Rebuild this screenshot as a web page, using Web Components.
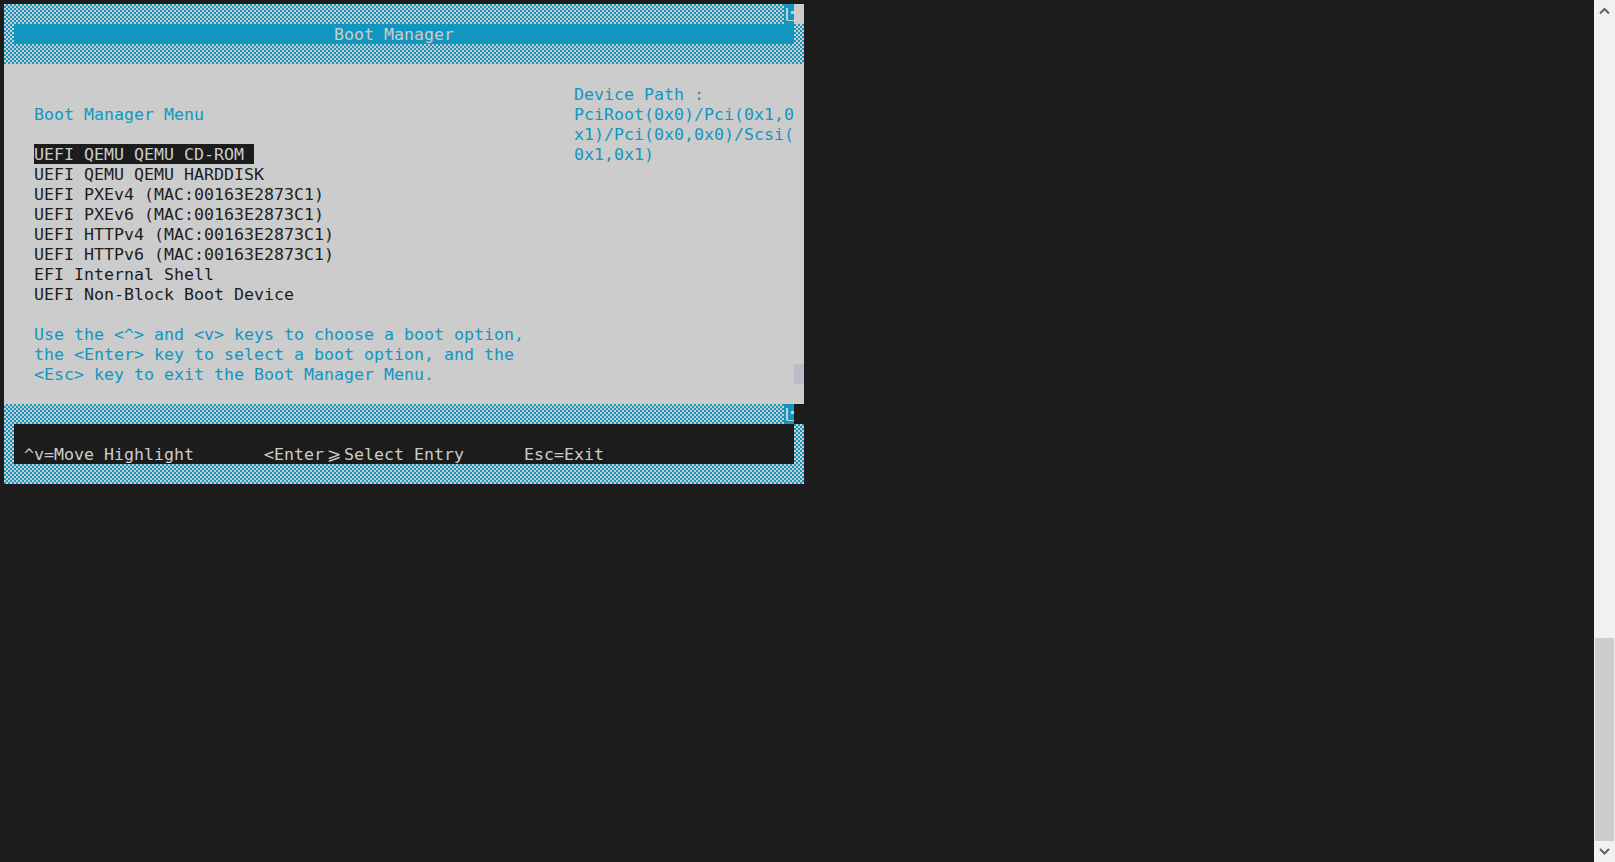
<!DOCTYPE html>
<html lang="en">
<head>
<meta charset="utf-8">
<title>Boot Manager</title>
<style>
    html, body {
        margin: 0;
        height: 100%;
        overflow: hidden;
        background: #1c1c1c;
    }

    :root {
        --blue: #1296bf;
        --gray: #cccccc;
        --black: #1c1c1c;
    }
</style>
</head>
<body>
<page-shell>
    <bios-screen>
        <corner-row slot="top" tail="#cccccc"></corner-row>
        <title-band slot="top">Boot Manager</title-band>
        <menu-panel slot="middle">
            <text-line slot="title" tone="blue">Boot Manager Menu</text-line>
            <text-line slot="items" selected>UEFI QEMU QEMU CD-ROM</text-line>
            <text-line slot="items">UEFI QEMU QEMU HARDDISK</text-line>
            <text-line slot="items">UEFI PXEv4 (MAC:00163E2873C1)</text-line>
            <text-line slot="items">UEFI PXEv6 (MAC:00163E2873C1)</text-line>
            <text-line slot="items">UEFI HTTPv4 (MAC:00163E2873C1)</text-line>
            <text-line slot="items">UEFI HTTPv6 (MAC:00163E2873C1)</text-line>
            <text-line slot="items">EFI Internal Shell</text-line>
            <text-line slot="items">UEFI Non-Block Boot Device</text-line>
            <text-line slot="help" tone="blue">Use the &lt;^&gt; and &lt;v&gt; keys to choose a boot option,</text-line>
            <text-line slot="help" tone="blue">the &lt;Enter&gt; key to select a boot option, and the</text-line>
            <text-line slot="help" tone="blue">&lt;Esc&gt; key to exit the Boot Manager Menu.</text-line>
            <text-line slot="path" tone="blue">Device Path :</text-line>
            <text-line slot="path" tone="blue">PciRoot(0x0)/Pci(0x1,0</text-line>
            <text-line slot="path" tone="blue">x1)/Pci(0x0,0x0)/Scsi(</text-line>
            <text-line slot="path" tone="blue">0x1,0x1)</text-line>
        </menu-panel>
        <corner-row slot="bottom" tail="#1c1c1c"></corner-row>
        <key-band slot="bottom"></key-band>
    </bios-screen>
    <page-scrollbar slot="bar"></page-scrollbar>
</page-shell>

<script>
// ==================== text cell grid: 10x20 per character ====================

// line-height 22 in a 20px row puts the baseline 1px lower, as in the reference
const monoFont = `font-family: "DejaVu Sans Mono", monospace; font-size: 16.61px; line-height: 22px;`;

class PageShell extends HTMLElement {
    constructor() {
        super();
        this.attachShadow({ mode: 'open' });
        this.shadowRoot.innerHTML = `
            <style>
                :host {
                    display: flex;
                    height: 862px;
                    justify-content: space-between;
                }
                .content {
                    padding: 4px;
                }
            </style>
            <div class="content"><slot></slot></div>
            <slot name="bar"></slot>
        `;
    }
}

class BiosScreen extends HTMLElement {
    constructor() {
        super();
        this.attachShadow({ mode: 'open' });
        this.shadowRoot.innerHTML = `
            <style>
                :host {
                    display: block;
                    width: 800px;
                    background: repeating-conic-gradient(var(--blue) 0 25%, var(--gray) 0 50%) 0 0 / 4px 4px;
                }
                .tail {
                    height: 20px;
                }
            </style>
            <slot name="top"></slot>
            <div class="tail"></div>
            <slot name="middle"></slot>
            <slot name="bottom"></slot>
            <div class="tail"></div>
        `;
    }
}

// 状态栏拐角: the stray corner glyph on the blue cell, then one plain cell
class CornerRow extends HTMLElement {
    constructor() {
        super();
        this.attachShadow({ mode: 'open' });
        this.shadowRoot.innerHTML = `
            <style>
                :host {
                    display: flex;
                    justify-content: flex-end;
                    height: 20px;
                }
                svg {
                    display: block;
                    width: 10px;
                    height: 20px;
                    background: var(--blue);
                }
                .tail {
                    width: 10px;
                    background: ${this.getAttribute('tail') || '#ccc'};
                }
            </style>
            <svg viewBox="0 0 10 20" aria-hidden="true">
                <path d="M2 4h2v12h6v1H3v-1H2z" fill="#ccc"/>
                <rect x="7" y="7" width="3" height="3" fill="#ccc"/>
            </svg>
            <div class="tail"></div>
        `;
    }
}

class TitleBand extends HTMLElement {
    constructor() {
        super();
        this.attachShadow({ mode: 'open' });
        this.shadowRoot.innerHTML = `
            <style>
                :host {
                    display: block;
                    height: 20px;
                    margin: 0 10px;
                    padding-left: 320px;
                    background: var(--blue);
                    color: var(--gray);
                    ${monoFont}
                }
            </style>
            <slot></slot>
        `;
    }
}

class TextLine extends HTMLElement {
    constructor() {
        super();
        this.attachShadow({ mode: 'open' });
        const isSelected = this.hasAttribute('selected');
        const color = this.getAttribute('tone') === 'blue' ? 'var(--blue)' : 'var(--black)';
        this.shadowRoot.innerHTML = `
            <style>
                :host {
                    display: block;
                    height: 20px;
                    ${monoFont}
                    color: ${isSelected ? 'var(--gray)' : color};
                }
                span {
                    display: block;
                    width: fit-content;
                    height: 20px;
                    white-space: pre;
                    background: ${isSelected ? 'var(--black)' : 'transparent'};
                    padding-right: ${isSelected ? '10px' : '0'};
                }
            </style>
            <span><slot></slot></span>
        `;
    }
}

class MenuPanel extends HTMLElement {
    constructor() {
        super();
        this.attachShadow({ mode: 'open' });
        this.shadowRoot.innerHTML = `
            <style>
                :host {
                    display: grid;
                    grid-template-columns: 540px 1fr;
                    height: 340px;
                    background: var(--gray);
                    position: relative;
                }
                .left {
                    padding: 40px 0 0 30px;
                    display: flex;
                    flex-direction: column;
                    gap: 20px;
                }
                .group {
                    display: block;
                }
                .right {
                    padding: 20px 0 0 30px;
                }
                /* 滚动块，盖在面板右缘 */
                .marker {
                    position: absolute;
                    right: 0;
                    top: 300px;
                    width: 10px;
                    height: 20px;
                    background: #bcbcc9;
                }
            </style>
            <div class="left">
                <div class="group"><slot name="title"></slot></div>
                <div class="group"><slot name="items"></slot></div>
                <div class="group"><slot name="help"></slot></div>
            </div>
            <div class="right"><slot name="path"></slot></div>
            <div class="marker"></div>
        `;
    }
}

class KeyBand extends HTMLElement {
    constructor() {
        super();
        this.attachShadow({ mode: 'open' });
        this.shadowRoot.innerHTML = `
            <style>
                :host {
                    display: block;
                    margin: 0 10px;
                    padding-top: 20px;
                    height: 20px;
                    background: var(--black);
                    color: var(--gray);
                    ${monoFont}
                }
                .keys {
                    display: grid;
                    grid-template-columns: 240px 260px 1fr;
                    height: 20px;
                    padding-left: 10px;
                }
                .ligature {
                    display: inline-block;
                    width: 20px;
                    text-align: center;
                }
            </style>
            <div class="keys">
                <span>^v=Move Highlight</span>
                <span>&lt;Enter<span class="ligature">⩾</span>Select Entry</span>
                <span>Esc=Exit</span>
            </div>
        `;
    }
}

class PageScrollbar extends HTMLElement {
    constructor() {
        super();
        this.attachShadow({ mode: 'open' });
        this.shadowRoot.innerHTML = `
            <style>
                :host {
                    display: flex;
                    flex-direction: column;
                    width: 21px;
                    height: 862px;
                    background: #f1f1f1;
                }
                svg {
                    display: block;
                    width: 21px;
                    height: 21px;
                }
                .spacer {
                    flex: 1;
                }
                .thumb {
                    height: 203px;
                    margin: 0 1px;
                    background: #cdcdcd;
                }
            </style>
            <svg viewBox="0 0 21 21" aria-hidden="true">
                <path d="M6 13.500l4.500-4.500 4.500 4.500" fill="none" stroke="#606060" stroke-width="2"/>
            </svg>
            <div class="spacer"></div>
            <div class="thumb"></div>
            <svg viewBox="0 0 21 21" aria-hidden="true">
                <path d="M6 8l4.500 4.500 4.500-4.500" fill="none" stroke="#606060" stroke-width="2"/>
            </svg>
        `;
    }
}

customElements.define('page-shell', PageShell);
customElements.define('bios-screen', BiosScreen);
customElements.define('corner-row', CornerRow);
customElements.define('title-band', TitleBand);
customElements.define('text-line', TextLine);
customElements.define('menu-panel', MenuPanel);
customElements.define('key-band', KeyBand);
customElements.define('page-scrollbar', PageScrollbar);
</script>
</body>
</html>
